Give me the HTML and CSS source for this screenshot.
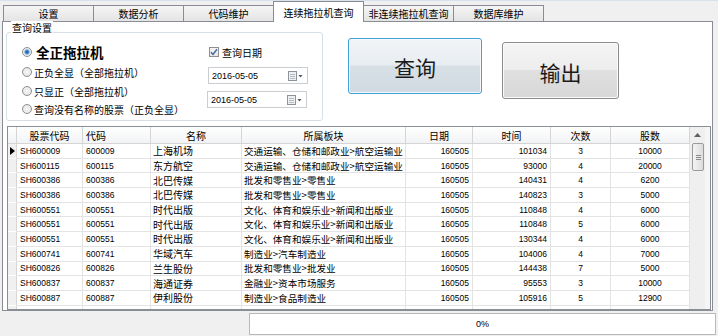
FILE: index.html
```html
<!DOCTYPE html>
<html lang="zh-CN">
<head>
<meta charset="utf-8">
<title>连续拖拉机查询</title>
<link rel="stylesheet" href="styles.css">
</head>
<body>
<div class="app">
  <div class="tabs">
    <div class="tab">设置</div>
    <div class="tab">数据分析</div>
    <div class="tab">代码维护</div>
    <div class="tab active">连续拖拉机查询</div>
    <div class="tab">非连续拖拉机查询</div>
    <div class="tab">数据库维护</div>
  </div>
  <div class="panel">
    <div class="top">
      <div class="group">
        <span class="legend">查询设置</span>
        <div class="gcol-left">
          <div class="opt opt-big"><span class="radio on"></span><span class="lbl-big">全正拖拉机</span></div>
          <div class="opt opt-2"><span class="radio"></span><span>正负全显（全部拖拉机）</span></div>
          <div class="opt opt-3"><span class="radio"></span><span>只显正（全部拖拉机）</span></div>
          <div class="opt opt-3"><span class="radio"></span><span>查询没有名称的股票（正负全显）</span></div>
        </div>
        <div class="gcol-right">
          <div class="chkrow"><span class="chk"><svg width="8" height="8" viewBox="0 0 8 8"><path d="M1 4.2 L3 6.4 L7 1.2" fill="none" stroke="#4b66a6" stroke-width="1.5"/></svg></span><span>查询日期</span></div>
          <div class="date d1"><span>2016-05-05</span><svg class="ico" width="15" height="10" viewBox="0 0 15 10"><rect x="0.5" y="0.5" width="8" height="9" fill="#eef0f2" stroke="#8d949c"/><path d="M2 3.5h5M2 5.5h5M2 7.5h5" stroke="#b6bcc3"/><path d="M10.5 4h4l-2 2.5z" fill="#4d5660"/></svg></div>
          <div class="date d2"><span>2016-05-05</span><svg class="ico" width="15" height="10" viewBox="0 0 15 10"><rect x="0.5" y="0.5" width="8" height="9" fill="#eef0f2" stroke="#8d949c"/><path d="M2 3.5h5M2 5.5h5M2 7.5h5" stroke="#b6bcc3"/><path d="M10.5 4h4l-2 2.5z" fill="#4d5660"/></svg></div>
        </div>
      </div>
      <div class="btn btn-q">查询</div>
      <div class="btn btn-o">输出</div>
    </div>
    <div class="grid">
      <div class="cols">
        <div class="hdr">
          <div></div><div>股票代码</div><div class="hl">代码</div><div>名称</div><div>所属板块</div><div>日期</div><div>时间</div><div>次数</div><div>股数</div>
        </div>
        <div class="body">
          <div class="row"><div class="rh"><svg width="5" height="8" viewBox="0 0 5 8"><path d="M0 0L5 4L0 8z" fill="#000"/></svg></div><div class="n">SH600009</div><div class="n">600009</div><div class="t">上海机场</div><div class="t s">交通运输、仓储和邮政业&gt;航空运输业</div><div class="n r">160505</div><div class="n r">101034</div><div class="n c">3</div><div class="n c">10000</div></div>
          <div class="row"><div class="rh"></div><div class="n">SH600115</div><div class="n">600115</div><div class="t">东方航空</div><div class="t s">交通运输、仓储和邮政业&gt;航空运输业</div><div class="n r">160505</div><div class="n r">93000</div><div class="n c">4</div><div class="n c">20000</div></div>
          <div class="row"><div class="rh"></div><div class="n">SH600386</div><div class="n">600386</div><div class="t">北巴传媒</div><div class="t s">批发和零售业&gt;零售业</div><div class="n r">160505</div><div class="n r">140431</div><div class="n c">4</div><div class="n c">6200</div></div>
          <div class="row"><div class="rh"></div><div class="n">SH600386</div><div class="n">600386</div><div class="t">北巴传媒</div><div class="t s">批发和零售业&gt;零售业</div><div class="n r">160505</div><div class="n r">140823</div><div class="n c">3</div><div class="n c">5000</div></div>
          <div class="row"><div class="rh"></div><div class="n">SH600551</div><div class="n">600551</div><div class="t">时代出版</div><div class="t s">文化、体育和娱乐业&gt;新闻和出版业</div><div class="n r">160505</div><div class="n r">110848</div><div class="n c">4</div><div class="n c">6000</div></div>
          <div class="row"><div class="rh"></div><div class="n">SH600551</div><div class="n">600551</div><div class="t">时代出版</div><div class="t s">文化、体育和娱乐业&gt;新闻和出版业</div><div class="n r">160505</div><div class="n r">110848</div><div class="n c">5</div><div class="n c">6000</div></div>
          <div class="row"><div class="rh"></div><div class="n">SH600551</div><div class="n">600551</div><div class="t">时代出版</div><div class="t s">文化、体育和娱乐业&gt;新闻和出版业</div><div class="n r">160505</div><div class="n r">130344</div><div class="n c">4</div><div class="n c">6000</div></div>
          <div class="row"><div class="rh"></div><div class="n">SH600741</div><div class="n">600741</div><div class="t">华域汽车</div><div class="t s">制造业&gt;汽车制造业</div><div class="n r">160505</div><div class="n r">104006</div><div class="n c">4</div><div class="n c">7000</div></div>
          <div class="row"><div class="rh"></div><div class="n">SH600826</div><div class="n">600826</div><div class="t">兰生股份</div><div class="t s">批发和零售业&gt;批发业</div><div class="n r">160505</div><div class="n r">144438</div><div class="n c">7</div><div class="n c">5000</div></div>
          <div class="row"><div class="rh"></div><div class="n">SH600837</div><div class="n">600837</div><div class="t">海通证券</div><div class="t s">金融业&gt;资本市场服务</div><div class="n r">160505</div><div class="n r">95553</div><div class="n c">3</div><div class="n c">10000</div></div>
          <div class="row"><div class="rh"></div><div class="n">SH600887</div><div class="n">600887</div><div class="t">伊利股份</div><div class="t s">制造业&gt;食品制造业</div><div class="n r">160505</div><div class="n r">105916</div><div class="n c">5</div><div class="n c">12900</div></div>
          <div class="row"><div class="rh"></div><div></div><div></div><div></div><div></div><div></div><div></div><div></div><div></div></div>
        </div>
      </div>
      <div class="vs">
        <div class="vs-bar">
          <div class="vs-up"><svg width="7" height="4" viewBox="0 0 7 4"><path d="M0 4L3.5 0L7 4z" fill="#606060"/></svg></div>
          <div class="thumb"><svg width="5" height="5" viewBox="0 0 5 5"><path d="M0 0.5h5M0 2.5h5M0 4.5h5" stroke="#8a8a8a"/></svg></div>
        </div>
      </div>
    </div>
  </div>
  <div class="status">
    <div class="progress">0%</div>
  </div>
</div>
</body>
</html>
```
FILE: styles.css
```css
* { box-sizing: border-box; margin: 0; padding: 0; }
html, body { width: 718px; height: 336px; overflow: hidden; }
body {
  background: #f0f0f0;
  font-family: "Noto Sans CJK SC", "Noto Sans CJK JP", sans-serif;
  font-size: 10px;
  color: #000;
}
.app {
  display: flex;
  flex-direction: column;
  height: 336px;
  border-top: 1px solid #d9e1ea;
}

/* tabs */
.tabs {
  display: flex;
  align-items: flex-end;
  height: 20px;
  padding-left: 3px;
  position: relative;
  z-index: 1;
}
.tab {
  width: 91px;
  height: 16px;
  margin-right: -1px;
  border: 1px solid #898c95;
  border-bottom: none;
  background: linear-gradient(#f5f5f5, #e4e4e4);
  display: flex;
  align-items: center;
  justify-content: center;
  line-height: 1;
  padding-top: 1px;
}
.tab.active {
  height: 21px;
  margin-bottom: -1px;
  background: #fff;
  padding-top: 2px;
}

/* panel */
.panel {
  margin-left: 2px;
  width: 711px;
  height: 290px;
  border: 1px solid #898c95;
  background: #fff;
}
.top {
  display: flex;
  align-items: flex-start;
  margin-top: 10px;
  height: 89px;
}
.group {
  position: relative;
  margin-left: 3px;
  width: 317px;
  height: 89px;
  border: 1px solid #d5dfe5;
  border-radius: 3px;
  display: flex;
  padding-left: 15px;
}
.legend {
  position: absolute;
  left: 4px;
  top: -12px;
  background: #fff;
  padding: 0 1px;
  line-height: 14px;
}
.gcol-left {
  width: 185px;
  padding-top: 9px;
  display: flex;
  flex-direction: column;
}
.opt {
  display: flex;
  align-items: center;
  gap: 2px;
  white-space: nowrap;
}
.opt-big { height: 20px; gap: 4px; }
.opt-2 { height: 20px; }
.opt-3 { height: 18px; }
.lbl-big { font-size: 13.5px; font-weight: 700; }
.radio {
  flex: none;
  width: 10px;
  height: 10px;
  border-radius: 50%;
  border: 1px solid #8e8f8f;
  background: radial-gradient(circle, #f6f6f6 0, #e2e2e2 100%);
}
.radio.on {
  background: radial-gradient(circle, #1d4f86 0, #3f86cf 1.6px, #b9d7ef 2.8px, #eeeeee 3.6px);
}
.gcol-right {
  padding-top: 10px;
  display: flex;
  flex-direction: column;
}
.chkrow {
  height: 18px;
  display: flex;
  align-items: center;
  gap: 3px;
  padding-left: 2px;
}
.chk {
  width: 10px;
  height: 10px;
  border: 1px solid #8f8f8f;
  background: linear-gradient(#f4f4f4, #e6e6e6);
  display: flex;
  align-items: center;
  justify-content: center;
}
.date {
  width: 100px;
  height: 17px;
  border: 1px solid #cacdd2;
  display: flex;
  align-items: center;
  padding-left: 3px;
  font-family: "Liberation Sans", sans-serif;
  font-size: 9px;
  background: #fff;
}
.d1 { margin-top: 6px; margin-left: 1px; }
.d2 { margin-top: 7px; }
.date .ico { margin-left: auto; margin-right: 4px; }

/* buttons */
.btn {
  display: flex;
  align-items: center;
  justify-content: center;
  font-size: 21px;
  border-radius: 3px;
  color: #1a1a1a;
  padding-top: 2px;
}
.btn-q {
  margin-left: 25px;
  margin-top: 6px;
  width: 134px;
  height: 56px;
  border: 1px solid #3ea1d8;
  background: linear-gradient(#f1f4f7 0, #e8edf1 48%, #d8e0e6 50%, #d1dae2 100%);
  box-shadow: inset 0 0 0 1px #f7fafc;
}
.btn-o {
  margin-left: 20px;
  margin-top: 10px;
  width: 117px;
  height: 57px;
  border: 1px solid #8b8b8b;
  background: linear-gradient(#f4f4f4 0, #ededed 48%, #e0e0e0 50%, #d7d7d7 100%);
  box-shadow: inset 0 0 0 1px #fbfbfb;
}

/* grid */
.grid {
  margin-left: 4px;
  margin-top: 5px;
  width: 704px;
  height: 184px;
  border: 1px solid #8a8f96;
  display: flex;
  background: #fff;
}
.cols { width: 682px; flex: none; }
.hdr, .row {
  display: grid;
  grid-template-columns: 9px 66px 68px 91px 164px 67px 78px 60px 79px;
}
.hdr {
  height: 17px;
  background: linear-gradient(#ffffff, #f1f2f4);
}
.hdr > div {
  border-right: 1px solid #d5d5d5;
  border-bottom: 1px solid #d5d5d5;
  display: flex;
  align-items: center;
  justify-content: center;
  white-space: nowrap;
}
.hdr > div.hl { justify-content: flex-start; padding-left: 3px; }
.body { height: 165px; overflow: hidden; }
.row { height: 14.7px; }
.row > div {
  border-right: 1px solid #e3e3e3;
  border-bottom: 1px solid #e3e3e3;
  display: flex;
  align-items: center;
  overflow: hidden;
  white-space: nowrap;
  padding: 0 3px;
}
.row > div.rh {
  background: #f0f0f0;
  border-right: 1px solid #d6d6d6;
  border-bottom: 1px solid #fdfdfd;
  padding: 0 0 0 2px;
}
.n { font-family: "Liberation Sans", sans-serif; font-size: 8.5px; }
.row > div.t { padding-left: 2px; }
.row > div.s { font-size: 9.6px; padding-right: 0; }
.r { justify-content: flex-end; }
.c { justify-content: center; }

/* scrollbar */
.vs { flex: 1; background: #f5f5f5; }
.vs-bar { width: 15px; height: 100%; background: #efefef; }
.vs-up {
  height: 16px;
  display: flex;
  align-items: center;
  justify-content: center;
}
.thumb {
  margin-left: 2px;
  width: 12px;
  height: 28px;
  border: 1px solid #9a9a9a;
  border-radius: 2px;
  background: linear-gradient(90deg, #f4f4f4, #dcdcdc);
  display: flex;
  align-items: center;
  justify-content: center;
}

/* status */
.status { flex: 1; padding: 2px 0 0 249px; }
.progress {
  width: 467px;
  height: 22px;
  border: 1px solid #b9b9b9;
  background: #fff;
  display: flex;
  align-items: center;
  justify-content: center;
  font-family: "Liberation Sans", sans-serif;
  font-size: 9px;
}
```
